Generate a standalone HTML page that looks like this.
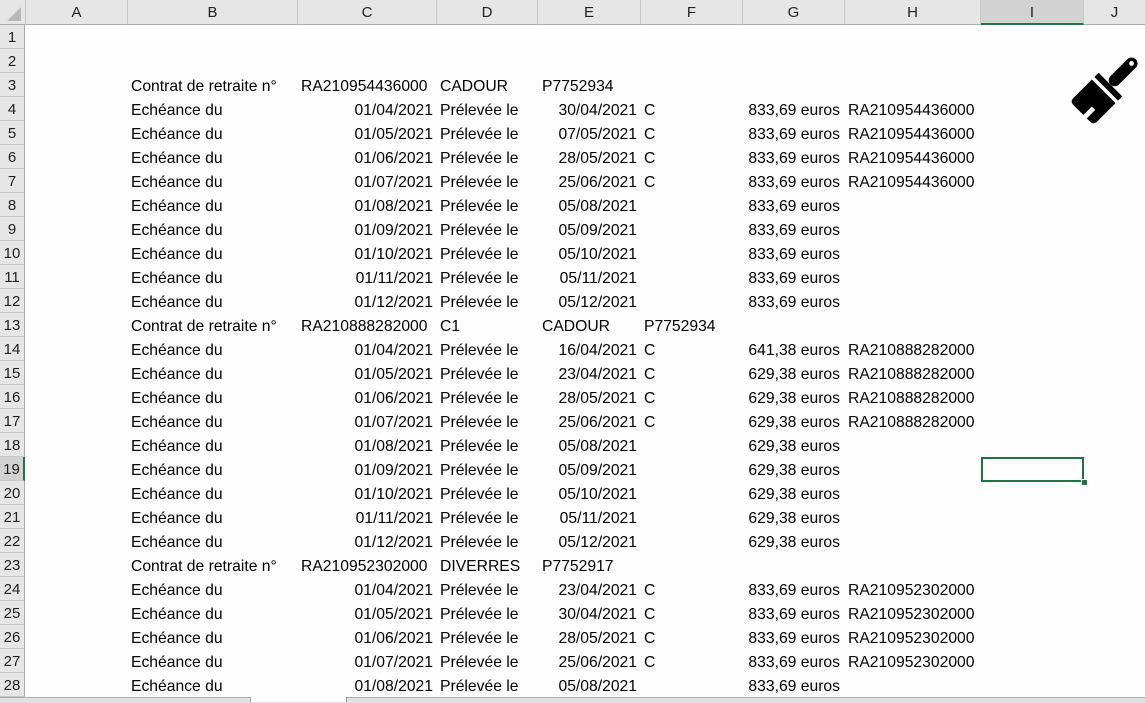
<!DOCTYPE html>
<html><head><meta charset="utf-8"><style>
body{margin:0;width:1145px;height:702px;overflow:hidden;background:#fdfefd;font-family:"Liberation Sans",sans-serif;font-size:15.7px;color:#000;position:relative}
.ch{position:absolute;top:0;height:25px;background:#e6e6e6;border-right:1px solid #c8c8c8;border-bottom:1px solid #ababab;box-sizing:border-box;text-align:center;line-height:25px;font-size:15px;color:#222}
.rh{position:absolute;left:0;width:25px;height:24px;background:#e6e6e6;border-bottom:1px solid #c8c8c8;border-right:1px solid #ababab;box-sizing:border-box;text-align:center;line-height:26px;font-size:15px;color:#222}
.r{position:absolute;left:0;width:1145px;height:24px;line-height:24px}
.r span{position:absolute;top:2px;white-space:nowrap}
.b{left:131px}.c{right:712px}.cl{left:301px}.d{left:440px}.e{right:508px}.el{left:542px}.f{left:644px}.g{right:305px}.h{left:848px}
</style></head><body>
<div class="ch" style="left:0;width:26px"><svg width="26" height="25"><polygon points="7,21 21,21 21,7" fill="#b8b8b8"/></svg></div>
<div class="ch" style="left:26px;width:102px">A</div>
<div class="ch" style="left:128px;width:170px">B</div>
<div class="ch" style="left:298px;width:139px">C</div>
<div class="ch" style="left:437px;width:101px">D</div>
<div class="ch" style="left:538px;width:103px">E</div>
<div class="ch" style="left:641px;width:102px">F</div>
<div class="ch" style="left:743px;width:102px">G</div>
<div class="ch" style="left:845px;width:136px">H</div>
<div class="ch" style="left:981px;width:103px;background:#d2d2d2;border-bottom:2px solid #217346">I</div>
<div class="ch" style="left:1084px;width:61px;border-right:none">J</div>
<div class="rh" style="top:25px">1</div><div class="rh" style="top:49px">2</div><div class="rh" style="top:73px">3</div><div class="rh" style="top:97px">4</div><div class="rh" style="top:121px">5</div><div class="rh" style="top:145px">6</div><div class="rh" style="top:169px">7</div><div class="rh" style="top:193px">8</div><div class="rh" style="top:217px">9</div><div class="rh" style="top:241px">10</div><div class="rh" style="top:265px">11</div><div class="rh" style="top:289px">12</div><div class="rh" style="top:313px">13</div><div class="rh" style="top:337px">14</div><div class="rh" style="top:361px">15</div><div class="rh" style="top:385px">16</div><div class="rh" style="top:409px">17</div><div class="rh" style="top:433px">18</div><div class="rh" style="top:457px;background:#d2d2d2;border-right:2px solid #217346">19</div><div class="rh" style="top:481px">20</div><div class="rh" style="top:505px">21</div><div class="rh" style="top:529px">22</div><div class="rh" style="top:553px">23</div><div class="rh" style="top:577px">24</div><div class="rh" style="top:601px">25</div><div class="rh" style="top:625px">26</div><div class="rh" style="top:649px">27</div><div class="rh" style="top:673px">28</div>

<div class="r" style="top:73px"><span class="b">Contrat de retraite n°</span><span class="cl">RA210954436000</span><span class="d">CADOUR</span><span class="el">P7752934</span></div>
<div class="r" style="top:97px"><span class="b">Echéance du</span><span class="c">01/04/2021</span><span class="d">Prélevée le</span><span class="e">30/04/2021</span><span class="f">C</span><span class="g">833,69 euros</span><span class="h">RA210954436000</span></div>
<div class="r" style="top:121px"><span class="b">Echéance du</span><span class="c">01/05/2021</span><span class="d">Prélevée le</span><span class="e">07/05/2021</span><span class="f">C</span><span class="g">833,69 euros</span><span class="h">RA210954436000</span></div>
<div class="r" style="top:145px"><span class="b">Echéance du</span><span class="c">01/06/2021</span><span class="d">Prélevée le</span><span class="e">28/05/2021</span><span class="f">C</span><span class="g">833,69 euros</span><span class="h">RA210954436000</span></div>
<div class="r" style="top:169px"><span class="b">Echéance du</span><span class="c">01/07/2021</span><span class="d">Prélevée le</span><span class="e">25/06/2021</span><span class="f">C</span><span class="g">833,69 euros</span><span class="h">RA210954436000</span></div>
<div class="r" style="top:193px"><span class="b">Echéance du</span><span class="c">01/08/2021</span><span class="d">Prélevée le</span><span class="e">05/08/2021</span><span class="g">833,69 euros</span></div>
<div class="r" style="top:217px"><span class="b">Echéance du</span><span class="c">01/09/2021</span><span class="d">Prélevée le</span><span class="e">05/09/2021</span><span class="g">833,69 euros</span></div>
<div class="r" style="top:241px"><span class="b">Echéance du</span><span class="c">01/10/2021</span><span class="d">Prélevée le</span><span class="e">05/10/2021</span><span class="g">833,69 euros</span></div>
<div class="r" style="top:265px"><span class="b">Echéance du</span><span class="c">01/11/2021</span><span class="d">Prélevée le</span><span class="e">05/11/2021</span><span class="g">833,69 euros</span></div>
<div class="r" style="top:289px"><span class="b">Echéance du</span><span class="c">01/12/2021</span><span class="d">Prélevée le</span><span class="e">05/12/2021</span><span class="g">833,69 euros</span></div>
<div class="r" style="top:313px"><span class="b">Contrat de retraite n°</span><span class="cl">RA210888282000</span><span class="d">C1</span><span class="el">CADOUR</span><span class="f">P7752934</span></div>
<div class="r" style="top:337px"><span class="b">Echéance du</span><span class="c">01/04/2021</span><span class="d">Prélevée le</span><span class="e">16/04/2021</span><span class="f">C</span><span class="g">641,38 euros</span><span class="h">RA210888282000</span></div>
<div class="r" style="top:361px"><span class="b">Echéance du</span><span class="c">01/05/2021</span><span class="d">Prélevée le</span><span class="e">23/04/2021</span><span class="f">C</span><span class="g">629,38 euros</span><span class="h">RA210888282000</span></div>
<div class="r" style="top:385px"><span class="b">Echéance du</span><span class="c">01/06/2021</span><span class="d">Prélevée le</span><span class="e">28/05/2021</span><span class="f">C</span><span class="g">629,38 euros</span><span class="h">RA210888282000</span></div>
<div class="r" style="top:409px"><span class="b">Echéance du</span><span class="c">01/07/2021</span><span class="d">Prélevée le</span><span class="e">25/06/2021</span><span class="f">C</span><span class="g">629,38 euros</span><span class="h">RA210888282000</span></div>
<div class="r" style="top:433px"><span class="b">Echéance du</span><span class="c">01/08/2021</span><span class="d">Prélevée le</span><span class="e">05/08/2021</span><span class="g">629,38 euros</span></div>
<div class="r" style="top:457px"><span class="b">Echéance du</span><span class="c">01/09/2021</span><span class="d">Prélevée le</span><span class="e">05/09/2021</span><span class="g">629,38 euros</span></div>
<div class="r" style="top:481px"><span class="b">Echéance du</span><span class="c">01/10/2021</span><span class="d">Prélevée le</span><span class="e">05/10/2021</span><span class="g">629,38 euros</span></div>
<div class="r" style="top:505px"><span class="b">Echéance du</span><span class="c">01/11/2021</span><span class="d">Prélevée le</span><span class="e">05/11/2021</span><span class="g">629,38 euros</span></div>
<div class="r" style="top:529px"><span class="b">Echéance du</span><span class="c">01/12/2021</span><span class="d">Prélevée le</span><span class="e">05/12/2021</span><span class="g">629,38 euros</span></div>
<div class="r" style="top:553px"><span class="b">Contrat de retraite n°</span><span class="cl">RA210952302000</span><span class="d">DIVERRES</span><span class="el">P7752917</span></div>
<div class="r" style="top:577px"><span class="b">Echéance du</span><span class="c">01/04/2021</span><span class="d">Prélevée le</span><span class="e">23/04/2021</span><span class="f">C</span><span class="g">833,69 euros</span><span class="h">RA210952302000</span></div>
<div class="r" style="top:601px"><span class="b">Echéance du</span><span class="c">01/05/2021</span><span class="d">Prélevée le</span><span class="e">30/04/2021</span><span class="f">C</span><span class="g">833,69 euros</span><span class="h">RA210952302000</span></div>
<div class="r" style="top:625px"><span class="b">Echéance du</span><span class="c">01/06/2021</span><span class="d">Prélevée le</span><span class="e">28/05/2021</span><span class="f">C</span><span class="g">833,69 euros</span><span class="h">RA210952302000</span></div>
<div class="r" style="top:649px"><span class="b">Echéance du</span><span class="c">01/07/2021</span><span class="d">Prélevée le</span><span class="e">25/06/2021</span><span class="f">C</span><span class="g">833,69 euros</span><span class="h">RA210952302000</span></div>
<div class="r" style="top:673px"><span class="b">Echéance du</span><span class="c">01/08/2021</span><span class="d">Prélevée le</span><span class="e">05/08/2021</span><span class="g">833,69 euros</span></div>

<div style="position:absolute;left:981px;top:457px;width:103px;height:25px;border:2px solid #217346;box-sizing:border-box"></div>
<div style="position:absolute;left:1081px;top:479px;width:5px;height:5px;background:#217346;border:1px solid #fff"></div>

<svg style="position:absolute;left:1059px;top:50px" width="86" height="86" viewBox="0 0 72 72">
<g transform="rotate(45 36 36)">
<rect x="31" y="-4" width="10" height="30" rx="5" fill="#000"/>
<circle cx="36" cy="1" r="2" fill="#fff"/>
<rect x="22" y="26" width="28" height="5" fill="#000"/>
<path d="M22 34 H50 V56 Q50 60 46 60 H42 V50 H38 V60 H26 Q22 60 22 56 Z" fill="#000"/>
</g></svg>

<div style="position:absolute;left:0;top:697px;width:1145px;height:5px;background:#e0e0e0;border-top:1px solid #b0b0b0"></div>
<div style="position:absolute;left:250px;top:697px;width:95px;height:5px;background:#fff;border-left:1px solid #999;border-right:1px solid #999"></div>
</body></html>
